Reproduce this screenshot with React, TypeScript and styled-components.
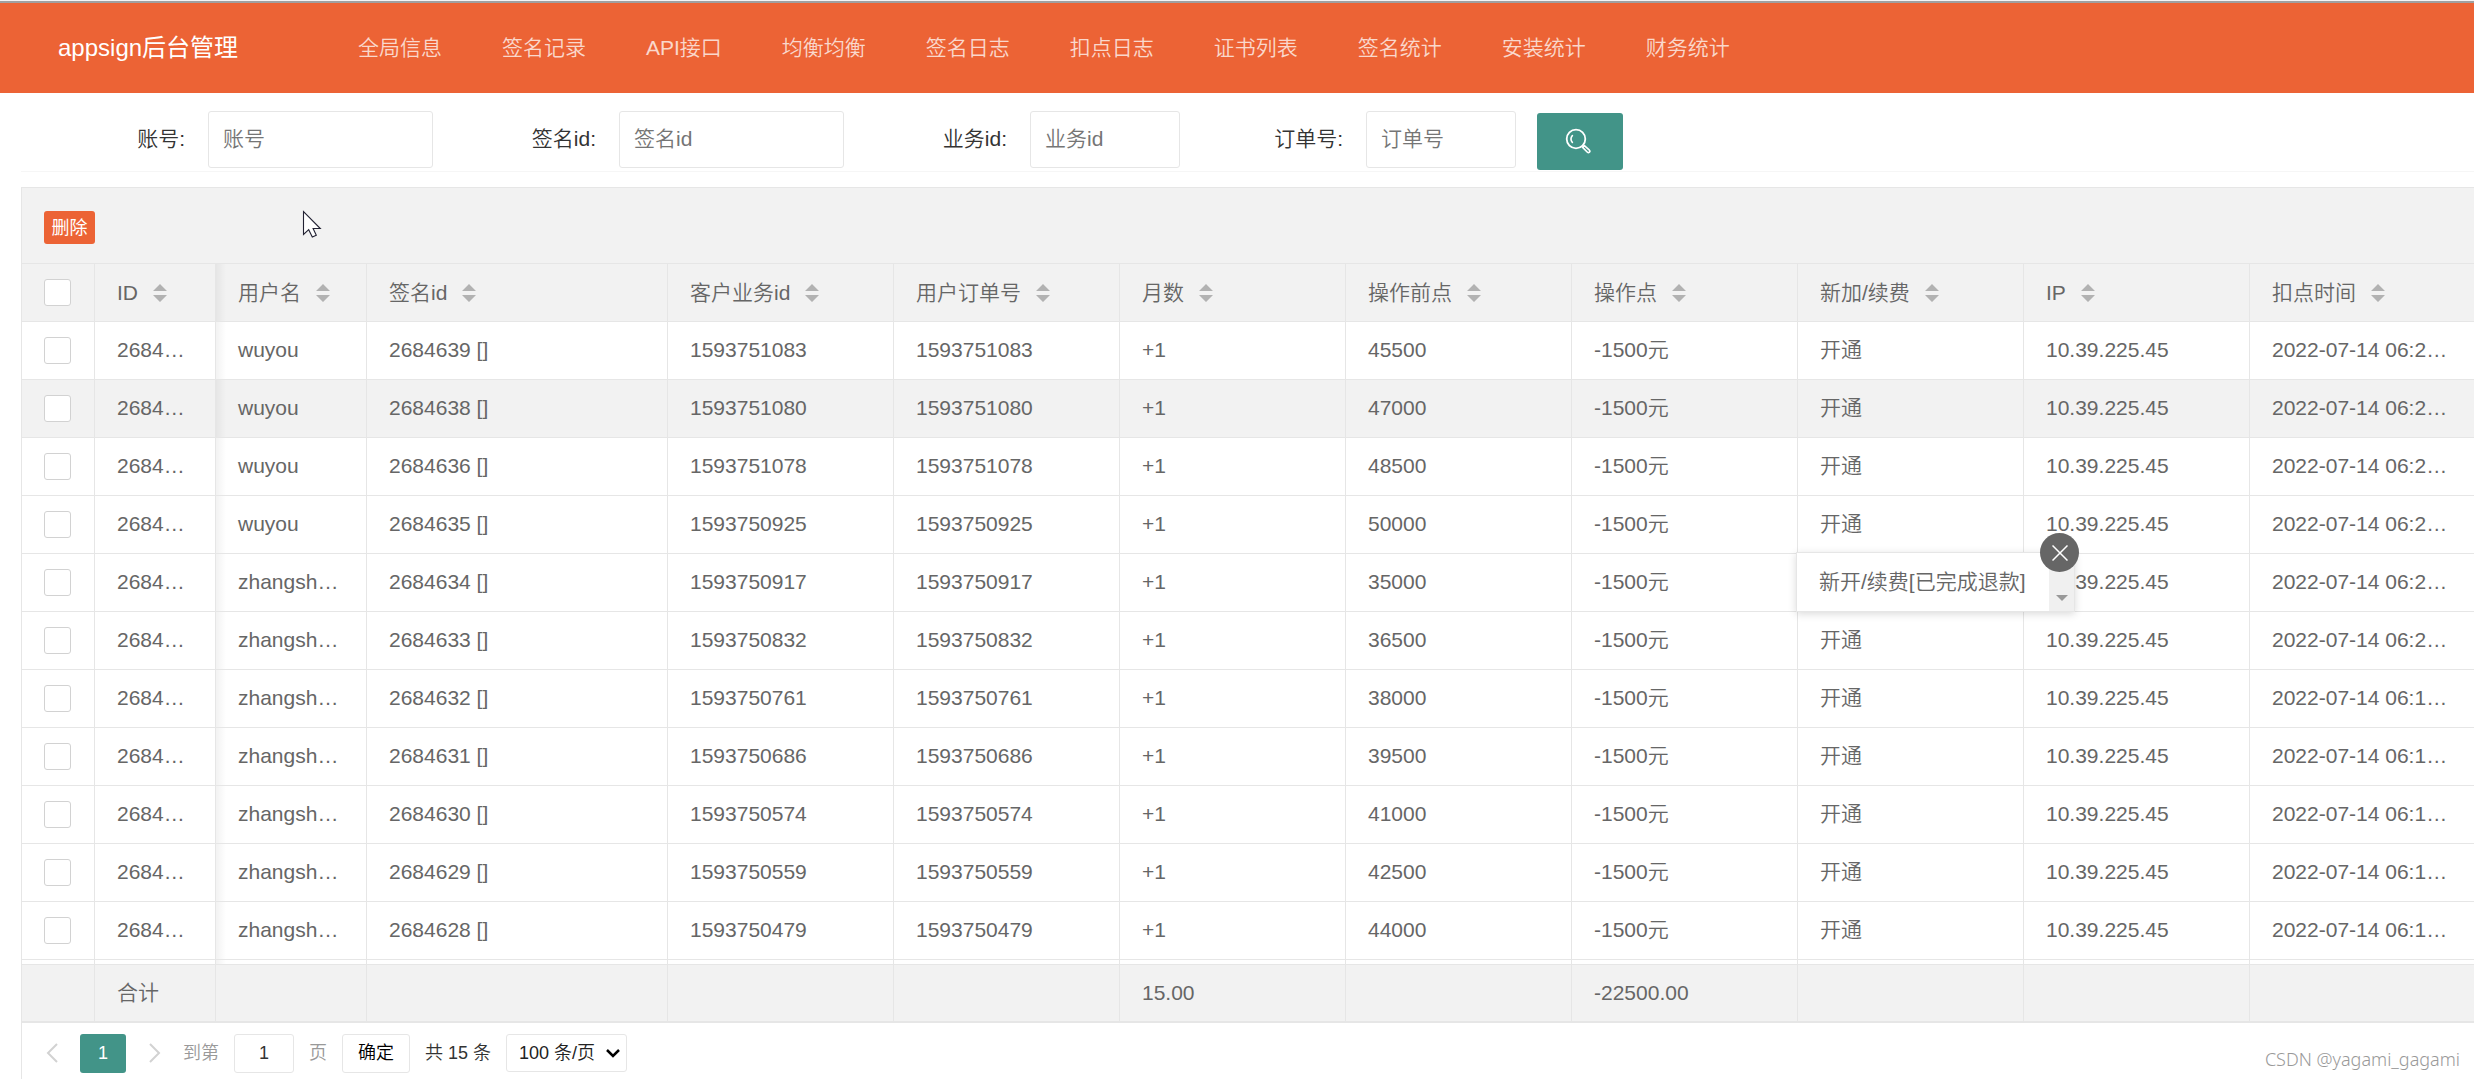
import React from "react";
import styled, { createGlobalStyle } from "styled-components";

const GlobalStyle = createGlobalStyle`
  * { box-sizing: border-box; }
  body {
    margin: 0;
    background: #fff;
    color: #333;
    font: 350 21px/30px "Liberation Sans", "Noto Sans CJK SC", sans-serif;
  }
  button, input, select { font: inherit; color: inherit; margin: 0; }
`;

const ORANGE = "#ec6335";
const GREEN = "#429488";
const LINE = "#e6e6e6";

const Page = styled.div`
  display: flex;
  flex-direction: column;
  min-height: 100vh;
  overflow: hidden;
  border-top: 1px solid #f4f4f4;
`;

const Header = styled.header`
  display: flex;
  align-items: center;
  height: 92px;
  padding: 0 58px;
  border-top: 2px solid #a0a0a0;
  background: ${ORANGE};
`;

const Brand = styled.a`
  width: 270px;
  color: #fff;
  font-size: 24px;
  font-weight: 400;
  text-decoration: none;
`;

const Nav = styled.nav`
  display: flex;
`;

const NavLink = styled.a`
  padding: 0 30px;
  color: rgba(255, 255, 255, 0.75);
  text-decoration: none;
  white-space: nowrap;
`;

const Content = styled.main`
  display: flex;
  flex: 1;
  flex-direction: column;
  padding-left: 21px;
`;

const SearchForm = styled.form`
  display: flex;
  align-items: center;
  gap: 21px;
  height: 79px;
  padding: 14px 0 0 22px;
  border-bottom: 1px solid #f6f6f6;
`;

const Field = styled.div`
  display: flex;
  align-items: center;
`;

const FieldLabel = styled.label`
  width: 165px;
  padding-right: 23px;
  text-align: right;
`;

const TextInput = styled.input<{ $width: number }>`
  width: ${(p) => p.$width}px;
  height: 57px;
  padding: 0 14px;
  border: 1px solid ${LINE};
  border-radius: 3px;
  background: #fff;
  &::placeholder { color: #757575; opacity: 1; }
`;

const SearchButton = styled.button`
  display: grid;
  place-items: center;
  width: 86px;
  height: 57px;
  margin-top: 4px;
  padding: 0 4px 0 0;
  border: 0;
  border-radius: 3px;
  background: ${GREEN};
  color: #fff;
`;

const Card = styled.section`
  flex: 1;
  margin-top: 15px;
  border: solid ${LINE};
  border-width: 1px 0 0 1px;
`;

const Toolbar = styled.div`
  position: relative;
  display: flex;
  align-items: center;
  height: 76px;
  padding-left: 22px;
  border-bottom: 1px solid ${LINE};
  background: #f2f2f2;
`;

const DeleteButton = styled.button`
  height: 33px;
  width: 51px;
  margin-top: 4px;
  padding: 0;
  border: 0;
  border-radius: 3px;
  background: ${ORANGE};
  color: #fff;
  font-size: 18px;
  font-weight: 400;
  line-height: 30px;
`;

const Pointer = styled.svg`
  position: absolute;
  left: 280px;
  top: 22px;
`;

const Table = styled.table`
  width: 100%;
  border-spacing: 0;
  table-layout: fixed;
  color: #666;
`;

const Col = styled.col<{ $width?: number }>`
  width: ${(p) => (p.$width ? `${p.$width}px` : "auto")};
`;

const Cell = styled.td<{ $shade?: boolean }>`
  position: relative;
  height: 58px;
  padding: 0 22px;
  border: solid ${LINE};
  border-width: 0 1px 1px 0;
  font-weight: 350;
  text-align: left;
  white-space: nowrap;
  background-image: ${(p) =>
    p.$shade ? "linear-gradient(to right, rgba(0,0,0,.05), rgba(0,0,0,0) 10px)" : "none"};
  &:last-child { border-right: 0; }
`;

const HeadRow = styled.tr`
  background: #f2f2f2;
`;

const BodyRow = styled.tr<{ $active: boolean }>`
  background: ${(p) => (p.$active ? "#f2f2f2" : "#fff")};
`;

const BodyCell = styled(Cell)`
  padding-bottom: 2px;
`;

const SpacerCell = styled(Cell)`
  height: 5px;
`;

const TotalCell = styled(Cell)`
  border-bottom-width: 2px;
  background: #f2f2f2;
`;

const Sortable = styled.span`
  display: flex;
  align-items: center;
  gap: 15px;
`;

const CheckBox = styled.input`
  appearance: none;
  display: block;
  width: 27px;
  height: 27px;
  margin: 0;
  border: 1px solid #d2d2d2;
  border-radius: 3px;
  background: #fff;
  &:checked { background: ${GREEN}; }
`;

const Tip = styled.div`
  position: absolute;
  z-index: 2;
  left: -2px;
  top: -2px;
  display: flex;
  align-items: center;
  justify-content: space-between;
  width: 279px;
  height: 60px;
  padding-left: 22px;
  border: 1px solid ${LINE};
  background: #fff;
  box-shadow: 0 2px 8px rgba(0, 0, 0, 0.15);
`;

const TipArrow = styled.span`
  display: flex;
  align-items: flex-end;
  justify-content: center;
  width: 25px;
  height: 100%;
  padding-bottom: 10px;
  background: #f0f0f0;
`;

const TipClose = styled.button`
  position: absolute;
  right: -5px;
  top: -20px;
  display: grid;
  place-items: center;
  width: 39px;
  height: 39px;
  padding: 0;
  border: 0;
  border-radius: 50%;
  background: #666;
`;

const Pager = styled.div`
  display: flex;
  align-items: center;
  gap: 15px;
  padding: 10px 22px 6px;
  font-size: 18px;
`;

const PageArrow = styled.button`
  display: grid;
  place-items: center;
  width: 15px;
  height: 39px;
  padding: 0;
  border: 0;
  background: none;
`;

const PageSteps = styled.div`
  display: flex;
  gap: 21px;
  margin-right: 6px;
`;

const PageButton = styled.button`
  width: 46px;
  height: 39px;
  padding: 0;
  border: 0;
  border-radius: 3px;
  background: ${GREEN};
  color: #fff;
`;

const Muted = styled.label`
  color: #999;
`;

const PageInput = styled.input`
  width: 60px;
  height: 39px;
  padding: 0;
  border: 1px solid ${LINE};
  border-radius: 3px;
  background: #fff;
  color: #333;
  text-align: center;
`;

const ConfirmButton = styled.button`
  width: 68px;
  height: 39px;
  padding: 0;
  border: 1px solid ${LINE};
  border-radius: 3px;
  background: #fff;
  color: #000;
`;

const SizeBox = styled.span`
  display: grid;
  align-items: center;
  justify-items: end;
  > * { grid-area: 1 / 1; }
  > svg { margin-right: 7px; pointer-events: none; }
`;

const SizeSelect = styled.select`
  appearance: none;
  width: 121px;
  height: 38px;
  padding: 0 0 0 12px;
  border: 1px solid ${LINE};
  border-radius: 3px;
  background: #fff;
  color: #222;
`;

const Watermark = styled.span`
  margin-left: auto;
  margin-right: -8px;
  padding-top: 12px;
  color: #999;
  font: 300 18px/28px "Noto Sans", sans-serif;
`;

const SortIcon = () => (
  <svg width="14" height="18" viewBox="0 0 14 18" fill="#b2b2b2" aria-hidden="true">
    <path d="M7 0 14 7H0ZM0 11H14L7 18Z" />
  </svg>
);

const SearchIcon = () => (
  <svg width="26" height="26" viewBox="0 0 26 26" fill="none" stroke="currentColor" aria-hidden="true">
    <circle cx="11" cy="11" r="9.3" strokeWidth="1.8" />
    <path d="M7.4 14.5a5.5 5.5 0 0 1 0-7" strokeWidth="1.6" strokeLinecap="round" />
    <path d="m17.6 19.4 1.8-1.8 5 4.6a1.4 1.4 0 0 1-2 2Z" strokeWidth="1.6" strokeLinejoin="round" />
  </svg>
);

const Chevron = ({ flip }: { flip?: boolean }) => (
  <svg width="12" height="20" viewBox="0 0 12 20" fill="none" stroke="#d2d2d2" strokeWidth="2" aria-hidden="true">
    <path d={flip ? "m1 1 9 9-9 9" : "m11 1-9 9 9 9"} />
  </svg>
);

const navItems = ["全局信息", "签名记录", "API接口", "均衡均衡", "签名日志", "扣点日志", "证书列表", "签名统计", "安装统计", "财务统计"];

const fields = [
  { id: "account", label: "账号", width: 225 },
  { id: "sign", label: "签名id", width: 225 },
  { id: "business", label: "业务id", width: 150 },
  { id: "order", label: "订单号", width: 150 },
];

const columns: { title: string; width?: number }[] = [
  { title: "ID", width: 121 },
  { title: "用户名", width: 151 },
  { title: "签名id", width: 301 },
  { title: "客户业务id", width: 226 },
  { title: "用户订单号", width: 226 },
  { title: "月数", width: 226 },
  { title: "操作前点", width: 226 },
  { title: "操作点", width: 226 },
  { title: "新加/续费", width: 226 },
  { title: "IP", width: 226 },
  { title: "扣点时间" },
];

const records = [
  ["wuyou", "2684639", "1593751083", "45500", "06:2…"],
  ["wuyou", "2684638", "1593751080", "47000", "06:2…"],
  ["wuyou", "2684636", "1593751078", "48500", "06:2…"],
  ["wuyou", "2684635", "1593750925", "50000", "06:2…"],
  ["zhangsh…", "2684634", "1593750917", "35000", "06:2…"],
  ["zhangsh…", "2684633", "1593750832", "36500", "06:2…"],
  ["zhangsh…", "2684632", "1593750761", "38000", "06:1…"],
  ["zhangsh…", "2684631", "1593750686", "39500", "06:1…"],
  ["zhangsh…", "2684630", "1593750574", "41000", "06:1…"],
  ["zhangsh…", "2684629", "1593750559", "42500", "06:1…"],
  ["zhangsh…", "2684628", "1593750479", "44000", "06:1…"],
];

const totals = ["", "合计", "", "", "", "", "15.00", "", "-22500.00", "", "", ""];

const RefundTip = () => (
  <Tip>
    <span>新开/续费[已完成退款]</span>
    <TipArrow>
      <svg width="12" height="6" viewBox="0 0 12 6" fill="#999" aria-hidden="true">
        <path d="M0 0H12L6 6Z" />
      </svg>
    </TipArrow>
    <TipClose type="button" aria-label="关闭">
      <svg width="16" height="16" viewBox="0 0 16 16" stroke="#fff" strokeWidth="1.5" aria-hidden="true">
        <path d="M0.5.5 15.5 15.5M15.5.5.5 15.5" />
      </svg>
    </TipClose>
  </Tip>
);

export default function App() {
  return (
    <>
      <GlobalStyle />
      <Page>
        <Header>
          <Brand href="#">appsign后台管理</Brand>
          <Nav>
            {navItems.map((item) => (
              <NavLink key={item} href="#">{item}</NavLink>
            ))}
          </Nav>
        </Header>
        <Content>
          <SearchForm onSubmit={(e) => e.preventDefault()}>
            {fields.map((f) => (
              <Field key={f.id}>
                <FieldLabel htmlFor={f.id}>{f.label}:</FieldLabel>
                <TextInput id={f.id} placeholder={f.label} $width={f.width} />
              </Field>
            ))}
            <SearchButton type="submit" aria-label="搜索">
              <SearchIcon />
            </SearchButton>
          </SearchForm>
          <Card>
            <Toolbar>
              <DeleteButton type="button">删除</DeleteButton>
              <Pointer width="20" height="28" viewBox="0 0 20 28" aria-hidden="true">
                <path d="M1.5 1.5V24.5l5.2-4.8 3.6 7.3 4-1.8-3.2-6.7h7.2Z" fill="#fff" stroke="#222233" strokeWidth="1.1" />
              </Pointer>
            </Toolbar>
            <Table>
              <colgroup>
                <Col $width={73} />
                {columns.map((c) => (
                  <Col key={c.title} $width={c.width} />
                ))}
              </colgroup>
              <thead>
                <HeadRow>
                  <Cell as="th" scope="col">
                    <CheckBox type="checkbox" aria-label="全选" />
                  </Cell>
                  {columns.map((c) => (
                    <Cell as="th" scope="col" key={c.title} $shade={c.title === "用户名"}>
                      <Sortable>
                        {c.title}
                        <SortIcon />
                      </Sortable>
                    </Cell>
                  ))}
                </HeadRow>
              </thead>
              <tbody>
                {records.map(([user, sign, order, before, time]) => (
                  <BodyRow key={sign} $active={sign === "2684638"}>
                    <Cell>
                      <CheckBox type="checkbox" aria-label={sign} />
                    </Cell>
                    <BodyCell>2684…</BodyCell>
                    <BodyCell $shade>{user}</BodyCell>
                    <BodyCell>{sign} []</BodyCell>
                    <BodyCell>{order}</BodyCell>
                    <BodyCell>{order}</BodyCell>
                    <BodyCell>+1</BodyCell>
                    <BodyCell>{before}</BodyCell>
                    <BodyCell>-1500元</BodyCell>
                    <BodyCell>{sign === "2684634" ? <RefundTip /> : "开通"}</BodyCell>
                    <BodyCell>10.39.225.45</BodyCell>
                    <BodyCell>2022-07-14 {time}</BodyCell>
                  </BodyRow>
                ))}
                <tr aria-hidden="true">
                  {totals.map((_, i) => (
                    <SpacerCell key={i} $shade={i === 2} />
                  ))}
                </tr>
              </tbody>
              <tfoot>
                <tr>
                  {totals.map((t, i) => (
                    <TotalCell key={i}>{t}</TotalCell>
                  ))}
                </tr>
              </tfoot>
            </Table>
            <Pager>
              <PageSteps>
                <PageArrow type="button" aria-label="上一页"><Chevron /></PageArrow>
                <PageButton type="button">1</PageButton>
                <PageArrow type="button" aria-label="下一页"><Chevron flip /></PageArrow>
              </PageSteps>
              <Muted htmlFor="page">到第</Muted>
              <PageInput id="page" defaultValue="1" />
              <Muted as="span">页</Muted>
              <ConfirmButton type="button">确定</ConfirmButton>
              <span>共 15 条</span>
              <SizeBox>
                <SizeSelect aria-label="每页条数">
                  <option>100 条/页</option>
                </SizeSelect>
                <svg width="14" height="9" viewBox="0 0 14 9" fill="none" stroke="#000" strokeWidth="2.5" aria-hidden="true">
                  <path d="m1 1 6 6 6-6" />
                </svg>
              </SizeBox>
              <Watermark>CSDN @yagami_gagami</Watermark>
            </Pager>
          </Card>
        </Content>
      </Page>
    </>
  );
}
